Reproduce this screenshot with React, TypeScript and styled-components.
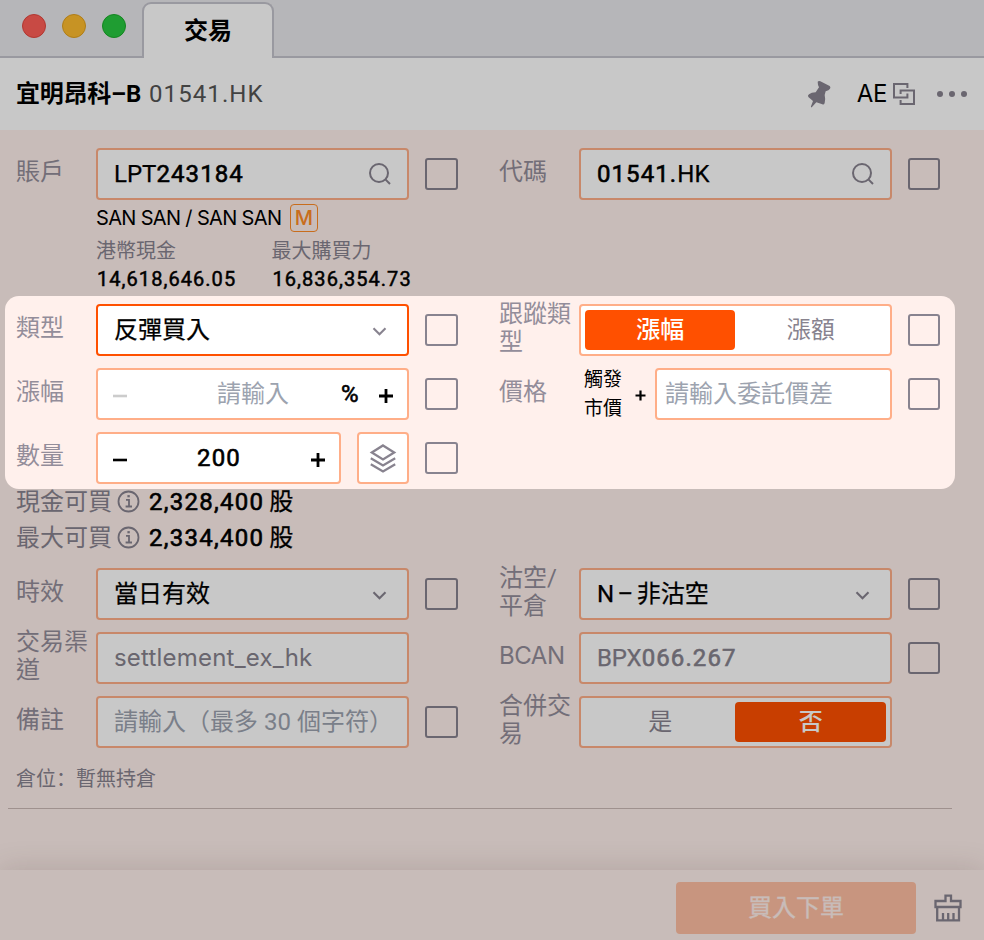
import React from "react";
import styled, { createGlobalStyle, css } from "styled-components";

const GlobalStyle = createGlobalStyle`
  *, *::before, *::after { box-sizing: border-box; }
  html, body { margin: 0; padding: 0; }
  body { background: #fff0ec; overflow: hidden; }
  svg { flex: none; }
`;

const cjk = `"Noto Sans CJK TC", "Noto Sans CJK SC", sans-serif`;
const grey = "#88838f";

const Window = styled.div`
  position: relative;
  width: 984px;
  height: 940px;
  overflow: hidden;
  display: flex;
  flex-direction: column;
  background: #fff0ec;
  font-family: Roboto, ${cjk};
  font-size: 24px;
  line-height: 28px;
  color: #000;
`;

const TitleBar = styled.div`
  display: flex;
  height: 58px;
  flex: none;
  background: #e9e9ec;
  padding-top: 2px;
`;

const Lights = styled.div`
  display: flex;
  gap: 16px;
  width: 142px;
  padding: 12px 0 0 22px;
  border-bottom: 2px solid #c4c3cc;
`;

const Light = styled.span<{ $fill: string; $ring: string }>`
  width: 24px;
  height: 24px;
  border-radius: 50%;
  background: ${(p) => p.$fill};
  border: 1px solid ${(p) => p.$ring};
`;

const Tab = styled.div`
  width: 132px;
  border: 2px solid #c4c3cc;
  border-bottom: 0;
  border-radius: 9px 9px 0 0;
  background: #fff;
  text-align: center;
  font-weight: 700;
  line-height: 54px;
`;

const TabRest = styled.div`
  flex: 1;
  border-bottom: 2px solid #c4c3cc;
`;

const Header = styled.div`
  display: flex;
  align-items: center;
  height: 72px;
  flex: none;
  padding: 0 17px 0 16px;
  background: #fff;
`;

const StockName = styled.span`
  font-weight: 700;
  letter-spacing: -0.25px;
  margin-right: 8px;
`;

const StockCode = styled.span`
  color: #555;
  letter-spacing: 1.1px;
`;

const HeaderTools = styled.div`
  margin-left: auto;
  display: flex;
  align-items: center;
`;

const Market = styled.span`
  font-family: Inter, sans-serif;
  margin: 0 6px 0 25px;
  letter-spacing: -0.4px;
`;

const Dots = styled.span`
  display: flex;
  gap: 6px;
  margin-left: 22px;
  i { width: 6px; height: 6px; border-radius: 50%; background: ${grey}; }
`;

const Form = styled.div`
  flex: 1;
  padding: 18px 0 0 16px;
  display: flex;
  flex-direction: column;
`;

const FieldGrid = styled.div`
  display: grid;
  grid-template-columns: 482.9px 442px;
  grid-auto-rows: 52px;
  row-gap: 12px;
`;

const Field = styled.div`
  display: flex;
  align-items: center;
  height: 52px;
`;

const Label = styled.div<{ $latin?: boolean }>`
  flex: none;
  width: 80px;
  padding-bottom: 4px;
  color: #938d9a;
  white-space: pre-line;
  ${(p) => p.$latin && css`font-family: Inter, sans-serif; letter-spacing: -0.4px;`}
`;

const Box = styled.div<{ $active?: boolean; $width?: number; $pad?: string }>`
  flex: none;
  display: flex;
  align-items: center;
  width: ${(p) => p.$width ?? 313}px;
  height: 52px;
  padding: ${(p) => p.$pad ?? "0 15px 0 16px"};
  border: 2px solid ${(p) => (p.$active ? "#ff5000" : "#ffae88")};
  border-radius: 4px;
  background: #fff;
`;

const StackButton = styled(Box)`
  width: 52px;
  padding: 0 10px;
  margin-left: 16px;
`;

const Value = styled.span<{ $muted?: boolean; $latin?: boolean }>`
  flex: 1;
  white-space: nowrap;
  word-spacing: -2.5px;
  color: ${(p) => (p.$muted ? "#87838e" : "#000")};
  -webkit-text-stroke: 0.25px currentColor;
  ${(p) => p.$latin && css`
    font-family: Inter, sans-serif;
    letter-spacing: 0.2px;
    -webkit-text-stroke: 0;
  `}
`;

const Digits = styled.span`
  letter-spacing: 1.1px;
  -webkit-text-stroke: 0.6px currentColor;
`;

const StepValue = styled(Digits)`
  flex: 1;
  text-align: center;
`;

const Placeholder = styled.span`
  white-space: nowrap;
  color: #9ca3af;
`;

const StepPlaceholder = styled(Placeholder)`
  flex: 1;
  text-align: center;
`;

const Percent = styled(Digits)`
  width: 38px;
  margin-left: -38px;
`;

const Check = styled.span`
  flex: none;
  width: 32.5px;
  height: 32.5px;
  margin-left: 16px;
  margin-bottom: 0.5px;
  border: 2px solid ${grey};
  border-radius: 3px;
`;

const Segments = styled(Box)`
  padding: 4px;
`;

const Segment = styled.div<{ $on?: boolean }>`
  flex: 1;
  height: 40px;
  border-radius: 4px;
  text-align: center;
  line-height: 40px;
  color: ${(p) => (p.$on ? "#fff" : grey)};
  background: ${(p) => (p.$on ? "#ff5000" : "transparent")};
  font-weight: ${(p) => (p.$on ? 500 : 400)};
`;

const Account = styled.div`
  height: 104px;
  padding: 4px 0 0 80px;
  font-size: 20px;
`;

const Holder = styled.div`
  display: flex;
  align-items: center;
  height: 28px;
  font-family: Inter, sans-serif;
  letter-spacing: -0.66px;
`;

const MarginBadge = styled.span`
  width: 28px;
  height: 28px;
  margin-left: 8.5px;
  border: 1px solid #ff8c26;
  border-radius: 4px;
  color: #ff8c26;
  text-align: center;
  line-height: 26px;
  letter-spacing: 0;
  font-weight: 500;
`;

const Balances = styled.div`
  display: grid;
  grid-template-columns: 175.5px 176px;
  grid-template-rows: 28px 28px;
  padding-top: 5px;
`;

const BalanceName = styled.span`
  color: ${grey};
`;

const BalanceValue = styled.span`
  padding-left: 1px;
  letter-spacing: 1.05px;
  -webkit-text-stroke: 0.5px currentColor;
`;

const Buyables = styled.div`
  padding-bottom: 12px;
`;

const Buyable = styled.div`
  display: flex;
  align-items: center;
  height: 36px;
  svg { margin: 0 9px 1px 5px; }
`;

const BuyableName = styled.span`
  color: ${grey};
`;

const BuyableValue = styled.span`
  letter-spacing: 1.25px;
  -webkit-text-stroke: 0.6px currentColor;
`;

const Unit = styled.span`
  margin-left: 5px;
  -webkit-text-stroke: 0.25px currentColor;
`;

const FirstRows = styled.div`
  display: flex;
  flex-direction: column;
`;

const TriggerRows = styled.div`
  height: 180px;
`;

const Trigger = styled.div`
  width: 49px;
  padding-left: 5px;
  font-size: 19px;
  line-height: 29px;
`;

const PriceJoin = styled.div`
  display: flex;
  align-items: center;
  width: 76px;
  gap: 7px;
`;

const Position = styled.div`
  margin: 16px 32px 0 -8px;
  height: 45px;
  padding: 0 8px;
  border-bottom: 1px solid #cbb9b5;
  font-family: "Noto Sans CJK SC", sans-serif;
  font-size: 20px;
  color: ${grey};
`;

const Footer = styled.div`
  display: flex;
  align-items: flex-start;
  justify-content: flex-end;
  gap: 18px;
  flex: none;
  height: 70px;
  padding: 12px 22px 0 0;
  background: #fff0ec;
  box-shadow: 0 0 30px rgba(80, 50, 40, 0.17);
`;

const Submit = styled.div`
  width: 240px;
  height: 52px;
  border-radius: 4px;
  background: #ffbfa2;
  color: #fff0ec;
  text-align: center;
  line-height: 52px;
  -webkit-text-stroke: 0.3px currentColor;
`;

const BroomSlot = styled.div`
  padding-top: 12px;
  line-height: 0;
`;

const Spotlight = styled.div`
  position: absolute;
  left: 5px;
  top: 296px;
  width: 950px;
  height: 193px;
  border-radius: 14px;
  box-shadow: 0 0 0 1200px rgba(0, 0, 0, 0.216);
  pointer-events: none;
`;

const SearchIcon = () => (
  <svg width="24" height="24" viewBox="0 0 24 24" fill="none" stroke={grey} strokeWidth="2">
    <circle cx="11" cy="11" r="9" />
    <path d="M17.4 17.4L22 22" />
  </svg>
);

const Chevron = () => (
  <svg width="24" height="24" viewBox="0 0 24 24" fill="none" stroke={grey} strokeWidth="2.1">
    <path d="M5.5 10.3L11.5 16.3L17.5 10.3" />
  </svg>
);

const Minus = ({ color = "#000" }: { color?: string }) => (
  <svg width="14" height="18" viewBox="0 0 14 18" stroke={color} strokeWidth="2.6">
    <path d="M0 11H14" />
  </svg>
);

const Plus = () => (
  <svg width="14" height="18" viewBox="0 0 14 18" stroke="#000" strokeWidth="2.8">
    <path d="M0 11H14M7 4V18" />
  </svg>
);

const SmallPlus = () => (
  <svg width="11" height="14" viewBox="0 0 11 14" stroke="#000" strokeWidth="2.2">
    <path d="M0.5 8.5H10.5M5.5 3.5V13.5" />
  </svg>
);

const InfoIcon = () => (
  <svg width="23" height="23" viewBox="0 0 23 23" fill="none" stroke={grey} strokeWidth="1.8">
    <circle cx="11.5" cy="11.5" r="10" />
    <path d="M9 9.8H12V16.3M8.6 16.5H15" />
    <path d="M10.4 6.2H12.8" strokeWidth="2.2" />
  </svg>
);

const LayersIcon = () => (
  <svg width="28" height="30" viewBox="0 0 28 30" fill="none" stroke={grey} strokeWidth="2.3">
    <path d="M14 2.4L25.2 9.4L14 16.4L2.8 9.4Z" />
    <path d="M1.8 15.2L14 22.4L26.2 15.2" />
    <path d="M1.8 21.2L14 28.4L26.2 21.2" />
  </svg>
);

const PinIcon = () => (
  <svg width="25" height="28" viewBox="81 85 75 84" fill={grey}>
    <path d="M113 90Q116 87 121 89L149 103Q153 106 150 111Q147 116 137 119L134 130Q137 142 134 154Q132 160 127 158L109 152L96 166Q92 169 93 164L99 148L85 136Q82 132 87 128Q94 122 107 122L117 107Q113 100 113 90Z" />
  </svg>
);

const CopyIcon = () => (
  <svg width="22" height="22" viewBox="0 0 22 22" fill="none" stroke={grey} strokeWidth="2">
    <path d="M14.4 5V1H1V14.4H14.4V10.5" />
    <path d="M7.6 11V7.6H21V21H7.6V17" />
  </svg>
);

const BroomIcon = () => (
  <svg width="28" height="28" viewBox="0 0 28 28" fill="none" stroke={grey} strokeWidth="2.3">
    <path d="M11.5 7V1.6H17V7H26.5V13H1.5V7Z" />
    <path d="M3.2 13V26.4H25V13M9 26V19M14.2 26V19M19.5 26V19" />
  </svg>
);

export default function App() {
  return (
    <>
      <GlobalStyle />
      <Window>
        <TitleBar>
          <Lights>
            <Light $fill="#ff5f57" $ring="#e2463f" />
            <Light $fill="#febc2e" $ring="#e0a01f" />
            <Light $fill="#28c840" $ring="#1aab29" />
          </Lights>
          <Tab>交易</Tab>
          <TabRest />
        </TitleBar>
        <Header>
          <StockName>宜明昂科–B</StockName>
          <StockCode>01541.HK</StockCode>
          <HeaderTools>
            <PinIcon />
            <Market>AE</Market>
            <CopyIcon />
            <Dots><i /><i /><i /></Dots>
          </HeaderTools>
        </Header>
        <Form>
          <FirstRows>
            <FieldGrid>
              <Field>
                <Label>賬戶</Label>
                <Box><Value>LPT<Digits>243184</Digits></Value><SearchIcon /></Box>
                <Check />
              </Field>
              <Field>
                <Label>代碼</Label>
                <Box><Value><Digits>01541.</Digits>HK</Value><SearchIcon /></Box>
                <Check />
              </Field>
            </FieldGrid>
            <Account>
              <Holder>SAN SAN / SAN SAN<MarginBadge>M</MarginBadge></Holder>
              <Balances>
                <BalanceName>港幣現金</BalanceName>
                <BalanceName>最大購買力</BalanceName>
                <BalanceValue>14,618,646.05</BalanceValue>
                <BalanceValue>16,836,354.73</BalanceValue>
              </Balances>
            </Account>
          </FirstRows>
          <TriggerRows>
            <FieldGrid>
              <Field>
                <Label>類型</Label>
                <Box $active><Value>反彈買入</Value><Chevron /></Box>
                <Check />
              </Field>
              <Field>
                <Label>跟蹤類型</Label>
                <Segments>
                  <Segment $on>漲幅</Segment>
                  <Segment>漲額</Segment>
                </Segments>
                <Check />
              </Field>
              <Field>
                <Label>漲幅</Label>
                <Box $pad="0 14px 0 15px">
                  <Minus color="#ccc" />
                  <StepPlaceholder>請輸入</StepPlaceholder>
                  <Percent>%</Percent>
                  <Plus />
                </Box>
                <Check />
              </Field>
              <Field>
                <Label>價格</Label>
                <PriceJoin><Trigger>觸發市價</Trigger><SmallPlus /></PriceJoin>
                <Box $width={237} $pad="0 8px"><Placeholder>請輸入委託價差</Placeholder></Box>
                <Check />
              </Field>
              <Field>
                <Label>數量</Label>
                <Box $width={245} $pad="0 14px 0 15px"><Minus /><StepValue>200</StepValue><Plus /></Box>
                <StackButton $width={52}><LayersIcon /></StackButton>
                <Check />
              </Field>
            </FieldGrid>
          </TriggerRows>
          <Buyables>
            <Buyable><BuyableName>現金可買</BuyableName><InfoIcon /><BuyableValue>2,328,400</BuyableValue><Unit>股</Unit></Buyable>
            <Buyable><BuyableName>最大可買</BuyableName><InfoIcon /><BuyableValue>2,334,400</BuyableValue><Unit>股</Unit></Buyable>
          </Buyables>
          <FieldGrid>
            <Field>
              <Label>時效</Label>
              <Box><Value>當日有效</Value><Chevron /></Box>
              <Check />
            </Field>
            <Field>
              <Label>{"沽空/\n平倉"}</Label>
              <Box><Value>N – 非沽空</Value><Chevron /></Box>
              <Check />
            </Field>
            <Field>
              <Label>交易渠道</Label>
              <Box><Value $muted $latin>settlement_ex_hk</Value></Box>
            </Field>
            <Field>
              <Label $latin>BCAN</Label>
              <Box><Value $muted>BPX<Digits>066.267</Digits></Value></Box>
              <Check />
            </Field>
            <Field>
              <Label>備註</Label>
              <Box><Placeholder>請輸入（最多 30 個字符）</Placeholder></Box>
              <Check />
            </Field>
            <Field>
              <Label>合併交易</Label>
              <Segments>
                <Segment>是</Segment>
                <Segment $on>否</Segment>
              </Segments>
            </Field>
          </FieldGrid>
          <Position>倉位：暫無持倉</Position>
        </Form>
        <Footer>
          <Submit>買入下單</Submit>
          <BroomSlot><BroomIcon /></BroomSlot>
        </Footer>
        <Spotlight />
      </Window>
    </>
  );
}
